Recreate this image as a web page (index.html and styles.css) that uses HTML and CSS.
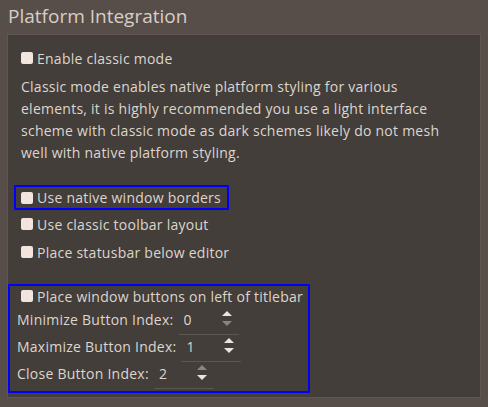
FILE: index.html
```html
<!DOCTYPE html>
<html>
<head>
<meta charset="utf-8">
<link rel="stylesheet" href="styles.css">
</head>
<body>
<div class="title">Platform Integration</div>
<div class="panel">
  <label class="check first"><span class="box"></span>Enable classic mode</label>
  <p class="desc">Classic mode enables native platform styling for various<br>elements, it is highly recommended you use a light interface<br>scheme with classic mode as dark schemes likely do not mesh<br>well with native platform styling.</p>
  <div class="hl hl-one">
    <label class="check"><span class="box"></span>Use native window borders</label>
  </div>
  <label class="check row"><span class="box"></span>Use classic toolbar layout</label>
  <label class="check row"><span class="box"></span>Place statusbar below editor</label>
  <div class="hl hl-two">
    <label class="check top"><span class="box"></span>Place window buttons on left of titlebar</label>
    <div class="spinrow">
      <span class="lbl">Minimize Button Index:</span>
      <span class="spin"><span class="val">0</span><span class="arrows"><span class="up"></span><span class="down off"></span></span></span>
    </div>
    <div class="spinrow">
      <span class="lbl">Maximize Button Index:</span>
      <span class="spin"><span class="val">1</span><span class="arrows"><span class="up"></span><span class="down"></span></span></span>
    </div>
    <div class="spinrow">
      <span class="lbl">Close Button Index:</span>
      <span class="spin"><span class="val">2</span><span class="arrows"><span class="up off"></span><span class="down"></span></span></span>
    </div>
  </div>
</div>
</body>
</html>
```
FILE: styles.css
```css
html, body {
  margin: 0;
  padding: 0;
  background: #574e49;
  width: 488px;
  height: 407px;
  overflow: hidden;
  font-family: "Open Sans", "Noto Sans", sans-serif;
  color: #ddd5ce;
}
.title {
  height: 34px;
  line-height: 32px;
  padding-left: 8px;
  font-size: 19px;
  color: #d6cec7;
}
.panel {
  margin-left: 7px;
  width: 472px;
  background: #433e3a;
  border: 1px solid #5f5651;
  padding-top: 12px;
  box-sizing: content-box;
  height: 350px;
  font-size: 14px;
  letter-spacing: 0.25px;
}
.check {
  display: flex;
  align-items: center;
  height: 22px;
  padding-left: 13px;
  white-space: nowrap;
}
.box {
  width: 12px;
  height: 12px;
  border-radius: 2px;
  background: #f1e5dd;
  margin-right: 4px;
  flex: none;
}
.desc {
  margin: 7px 0 0 13px;
  line-height: 22px;
  white-space: nowrap;
}
.hl {
  border: 2px solid #0000ff;
  box-sizing: border-box;
}
.hl-one {
  margin: 21px 0 0 6px;
  width: 215px;
  height: 25px;
}
.hl-one .check {
  height: 21px;
  padding-left: 5px;
}
.row {
  height: 28px;
}
.hl-two {
  margin-top: 18px;
  width: 302px;
  height: 109px;
}
.hl-two .check.top {
  height: 20px;
  padding-left: 11px;
}
.spinrow {
  display: flex;
  align-items: center;
  height: 27px;
  padding-left: 7px;
  white-space: nowrap;
}
.lbl {
  margin-right: 5px;
}
.spin {
  position: relative;
  display: flex;
  align-items: center;
  width: 60px;
  height: 24px;
  border-bottom: 1px solid #5d5550;
  box-sizing: border-box;
  margin-top: 6px;
}
.val {
  margin-left: 5px;
  margin-top: -6px;
}
.arrows {
  position: absolute;
  left: 43px;
  top: 0;
  display: flex;
  flex-direction: column;
  gap: 5px;
}
.up, .down {
  width: 0;
  height: 0;
  border-left: 5px solid transparent;
  border-right: 5px solid transparent;
}
.up {
  border-bottom: 5px solid #ece4dc;
}
.down {
  border-top: 5px solid #ece4dc;
}
.up.off {
  border-bottom-color: #8b837d;
}
.down.off {
  border-top-color: #8b837d;
}
```
